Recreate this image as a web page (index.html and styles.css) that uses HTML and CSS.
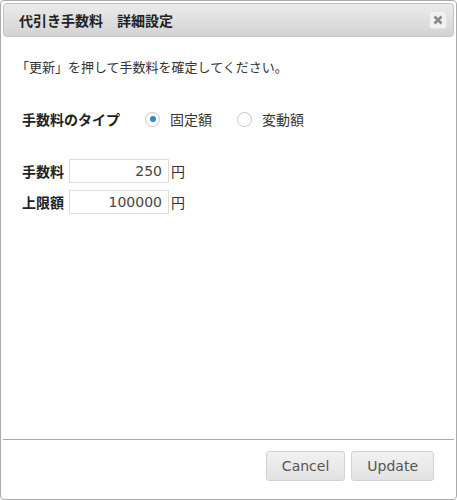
FILE: index.html
```html
<!DOCTYPE html>
<html lang="ja">
<head>
<meta charset="utf-8">
<link rel="stylesheet" href="styles.css">
</head>
<body>
<div class="dialog">
  <div class="titlebar">
    <span class="title">代引き手数料　詳細設定</span>
    <span class="close"><svg width="10" height="10" viewBox="0 0 10 10"><path d="M1.5 1.5 L8.5 8.5 M8.5 1.5 L1.5 8.5" stroke="#888" stroke-width="2.6" stroke-linecap="butt"/></svg></span>
  </div>
  <div class="content">
    <p class="note">「更新」を押して手数料を確定してください。</p>
    <div class="type-row">
      <span class="label type-label">手数料のタイプ</span>
      <label class="radio"><span class="circle checked"></span><span>固定額</span></label>
      <label class="radio"><span class="circle"></span><span>変動額</span></label>
    </div>
    <div class="fields">
      <div class="field-row">
        <span class="label">手数料</span>
        <span class="input">250</span>
        <span class="unit">円</span>
      </div>
      <div class="field-row">
        <span class="label">上限額</span>
        <span class="input">100000</span>
        <span class="unit">円</span>
      </div>
    </div>
  </div>
  <div class="footer">
    <button class="btn">Cancel</button>
    <button class="btn">Update</button>
  </div>
</div>
</body>
</html>
```
FILE: styles.css
```css
html, body {
  margin: 0;
  padding: 0;
  background: #fff;
}
body {
  font-family: "DejaVu Sans", "Noto Sans CJK JP", sans-serif;
  color: #333;
}
.dialog {
  width: 457px;
  height: 500px;
  box-sizing: border-box;
  border: 1px solid #aaa;
  border-radius: 4px;
  padding: 2px;
  display: flex;
  flex-direction: column;
  background: #fff;
}
.titlebar {
  height: 34px;
  box-sizing: border-box;
  border: 1px solid #c4c4c4;
  border-radius: 4px;
  background: linear-gradient(#ebebeb, #d3d3d3);
  display: flex;
  align-items: center;
  justify-content: space-between;
  padding: 0 6px 0 15px;
}
.title {
  font-family: "Noto Sans CJK JP", sans-serif;
  font-weight: bold;
  font-size: 14px;
  color: #222;
}
.close {
  width: 18px;
  height: 18px;
  box-sizing: border-box;
  border: 1px solid #e2e2e2;
  border-radius: 3px;
  background: #f1f1f1;
  display: flex;
  align-items: center;
  justify-content: center;
}
.content {
  flex: 1;
  padding: 0 13px;
  font-family: "Noto Sans CJK JP", sans-serif;
}
.note {
  margin: 0;
  padding-top: 20px;
  font-size: 13px;
  line-height: 19px;
  color: #333;
}
.type-row {
  margin: 32px 0 0 6px;
  display: flex;
  align-items: center;
  height: 22px;
  font-size: 14px;
}
.label {
  font-weight: bold;
  color: #222;
  font-size: 14px;
}
.type-label {
  width: 123px;
}
.radio {
  display: flex;
  align-items: center;
  gap: 10px;
  margin-right: 25px;
  color: #333;
}
.circle {
  width: 15px;
  height: 15px;
  box-sizing: border-box;
  border: 1px solid #c6c6c6;
  border-radius: 50%;
  background: #fff;
  display: flex;
  align-items: center;
  justify-content: center;
}
.circle.checked::after {
  content: "";
  width: 6px;
  height: 6px;
  border-radius: 50%;
  background: #2b8ad0;
}
.fields {
  margin: 29px 0 0 6px;
  display: flex;
  flex-direction: column;
  gap: 7px;
}
.field-row {
  display: flex;
  align-items: center;
  height: 24px;
}
.field-row .label {
  width: 47px;
}
.input {
  width: 100px;
  height: 24px;
  box-sizing: border-box;
  border: 1px solid #dcdcdc;
  font-family: "DejaVu Sans", sans-serif;
  font-size: 14px;
  color: #444;
  text-align: right;
  padding: 0 6px;
  line-height: 22px;
}
.unit {
  margin-left: 2px;
  font-size: 14px;
  color: #333;
}
.footer {
  border-top: 1px solid #aaa;
  height: 58px;
  box-sizing: border-box;
  display: flex;
  justify-content: flex-end;
  align-items: flex-start;
  gap: 6px;
  padding: 11px 20px 0 0;
}
.btn {
  height: 30px;
  box-sizing: border-box;
  border: 1px solid #d3d3d3;
  border-radius: 3px;
  background: linear-gradient(#f1f1f1, #e2e2e2);
  color: #555;
  font-family: "DejaVu Sans", sans-serif;
  font-size: 14px;
  padding: 0 15px;
  margin: 0;
}
```
